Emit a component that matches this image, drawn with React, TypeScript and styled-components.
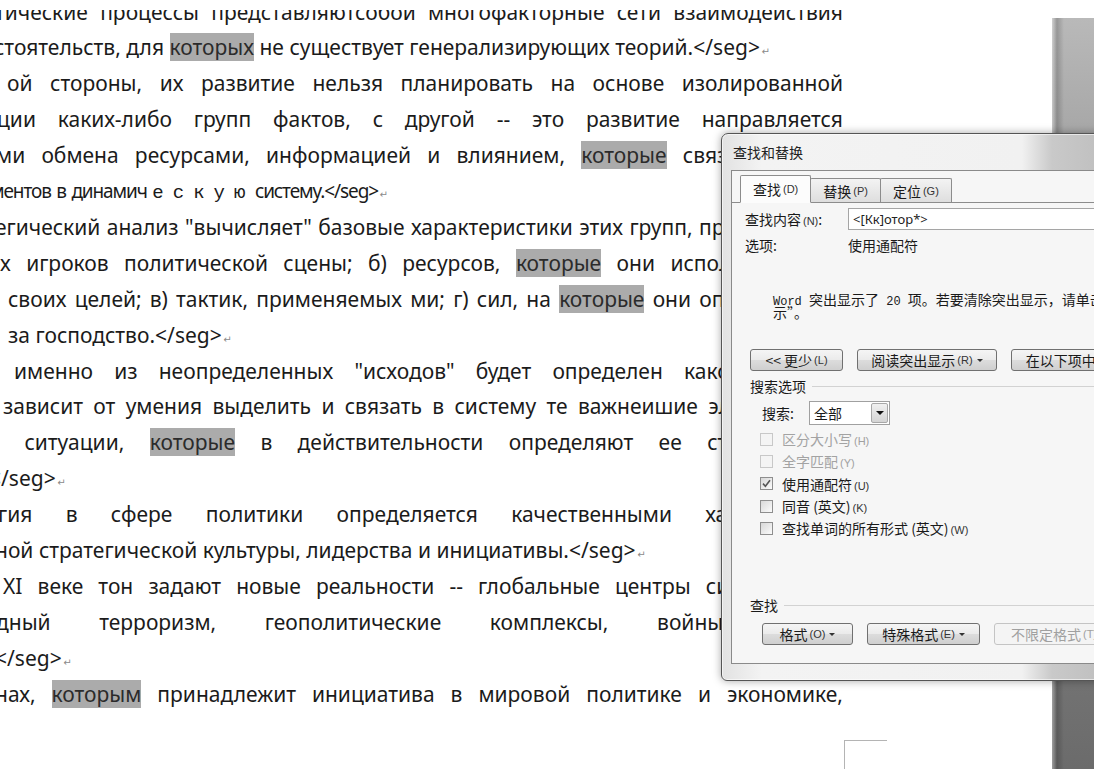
import React from "react"
import styled, { createGlobalStyle } from "styled-components"

const GlobalStyle = createGlobalStyle`
  html, body {
    margin: 0;
    padding: 0;
    background: #fff;
    overflow: hidden;
  }
`

const Screen = styled.div`
  position: relative;
  width: 1094px;
  height: 769px;
  overflow: hidden;
  display: flex;
  flex-direction: column;
  background: #fff;
`

/* white band of the window chrome above the scrolled page */
const TopCover = styled.div`
  height: 10px;
  flex-shrink: 0;
  background: #fff;
`

const Body = styled.div`
  flex: 1;
  display: flex;
  overflow: hidden;
`

/* ---------- document page ---------- */

const Page = styled.div`
  width: 1052px;
  flex-shrink: 0;
  display: flex;
  flex-direction: column;
  font-family: "Noto Sans", "Liberation Sans", sans-serif;
  font-size: 21px;
  color: #1b1b1b;
`

const TextColumn = styled.div`
  margin-top: -16px;
  display: flex;
  flex-direction: column;
`

const Line = styled.div<{ $justify?: boolean; $narrow?: boolean; $shift: number }>`
  display: flex;
  align-items: baseline;
  justify-content: ${p => (p.$justify ? "space-between" : "flex-start")};
  gap: ${p => (p.$justify ? "4px" : "5.5px")};
  width: ${p => 843 - p.$shift}px;
  margin-left: ${p => p.$shift}px;
  height: 35.9px;
  box-sizing: border-box;
  padding-top: ${p => (p.$narrow ? "5px" : "3.6px")};
  flex-shrink: 0;
  white-space: nowrap;
  font-size: ${p => (p.$narrow ? "19px" : "inherit")};
  letter-spacing: ${p => (p.$narrow ? "-1.1px" : "normal")};
`

const Hit = styled.span`
  background: #ababab;
  color: #2b2b2b;
`

const Spaced = styled.span`
  font-family: "Liberation Mono", monospace;
  font-size: 19px;
  letter-spacing: 9px;
  margin-right: -5px;
`

const ParaMark = styled.span`
  font-family: "DejaVu Sans", sans-serif;
  font-size: 10px;
  letter-spacing: 0;
  color: #8a8a8a;
  margin-left: -4px;
`

const CornerMark = styled.div`
  margin-top: 28px;
  margin-left: 844px;
  width: 42px;
  height: 40px;
  border-left: 1px solid #b4b4b4;
  border-top: 1px solid #b4b4b4;
`

const Gutter = styled.div`
  flex: 1;
  margin-top: 8px;
  background:
    linear-gradient(90deg, rgba(255, 255, 255, 0.35) 0, rgba(0, 0, 0, 0.18) 5px, rgba(0, 0, 0, 0) 12px),
    linear-gradient(180deg, #b9b9b9 0%, #a4a4a4 18%, #7e7e7e 70%, #6b6b6b 100%);
`

/* ---------- find & replace dialog ---------- */

const Dialog = styled.div`
  position: absolute;
  left: 721px;
  top: 133px;
  width: 430px;
  height: 548px;
  box-sizing: border-box;
  border: 1px solid #555;
  border-radius: 7px 7px 6px 6px;
  background: linear-gradient(90deg, #e2e2e2 0px, #f3f3f3 40px, #f1f1f1 300px, #c9c9c9 330px, #b6b6b6 100%);
  box-shadow: inset 0 0 0 1px rgba(255, 255, 255, 0.6), 0 0 8px rgba(0, 0, 0, 0.35);
  padding: 0 0 16px 9px;
  display: flex;
  flex-direction: column;
  overflow: hidden;
  font-family: "Noto Sans CJK SC", "Noto Sans", sans-serif;
  font-size: 14px;
  color: #1a1a1a;
`

const TitleBar = styled.div`
  height: 36px;
  display: flex;
  align-items: center;
  padding-left: 2px;
  color: #222;
`

const Panel = styled.div`
  flex: 1;
  border: 1px solid #8a8a8a;
  border-right: none;
  background: #f6f6f6;
  display: flex;
  flex-direction: column;
`

const TabRow = styled.div`
  height: 32px;
  box-sizing: border-box;
  display: flex;
  align-items: flex-end;
  padding-left: 8px;
  border-bottom: 1px solid #8c8c8c;
`

const Tab = styled.div<{ $active?: boolean }>`
  height: ${p => (p.$active ? "28px" : "24px")};
  box-sizing: border-box;
  padding: 0 12px;
  margin-bottom: ${p => (p.$active ? "-1px" : "0")};
  margin-left: ${p => (p.$active ? "0" : "-1px")};
  border: 1px solid #8c8c8c;
  border-bottom: ${p => (p.$active ? "1px solid #fcfcfc" : "none")};
  border-radius: 2px 2px 0 0;
  background: ${p => (p.$active ? "#fcfcfc" : "linear-gradient(#f3f3f3, #dedede)")};
  display: flex;
  align-items: center;
  white-space: nowrap;
  z-index: ${p => (p.$active ? 1 : 0)};
`

const Key = styled.span<{ $muted?: boolean }>`
  font-family: "Liberation Sans", sans-serif;
  font-size: 11px;
  margin-left: 2px;
  color: ${p => (p.$muted ? "#a0a0a0" : "#333")};
`

const Form = styled.div`
  display: flex;
  flex-direction: column;
  padding-left: 13px;
`

const FieldRow = styled.div<{ $top: number; $h: number }>`
  margin-top: ${p => p.$top}px;
  height: ${p => p.$h}px;
  display: flex;
  align-items: center;
  white-space: nowrap;
`

const FieldLabel = styled.span`
  width: 103px;
  flex-shrink: 0;
`

const Input = styled.div`
  flex: 1;
  height: 22px;
  box-sizing: border-box;
  border: 1px solid #a5a5a5;
  background: #fff;
  padding-left: 4px;
  display: flex;
  align-items: center;
  font-family: "Noto Sans", sans-serif;
  font-size: 13px;
  color: #222;
`

const Message = styled.div`
  margin-top: 39px;
  padding-left: 28px;
  display: flex;
  flex-direction: column;
`

const MessageLine = styled.div`
  height: 12.5px;
  line-height: 12.5px;
  white-space: nowrap;
`

const Mono = styled.span`
  font-family: "Liberation Mono", monospace;
  font-size: 12px;
  white-space: pre;
`

const ButtonRow = styled.div<{ $top: number; $left: number }>`
  margin-top: ${p => p.$top}px;
  padding-left: ${p => p.$left}px;
  display: flex;
  gap: 14px;
`

const Button = styled.div<{ $w: number; $disabled?: boolean }>`
  width: ${p => p.$w}px;
  height: 22px;
  flex-shrink: 0;
  box-sizing: border-box;
  border: 1px solid ${p => (p.$disabled ? "#c4c4c4" : "#707070")};
  border-radius: 3px;
  background: ${p =>
    p.$disabled ? "#f4f4f4" : "linear-gradient(#f5f5f5 0%, #ebebeb 48%, #dcdcdc 52%, #cfcfcf 100%)"};
  color: ${p => (p.$disabled ? "#a0a0a0" : "#1a1a1a")};
  display: flex;
  align-items: center;
  justify-content: center;
  white-space: nowrap;
`

const Caret = styled.span`
  width: 0;
  height: 0;
  margin-left: 4px;
  border-left: 3px solid transparent;
  border-right: 3px solid transparent;
  border-top: 3px solid #333;
`

const Group = styled.div<{ $top: number }>`
  margin-top: ${p => p.$top}px;
  padding-left: 5px;
  height: 16px;
  display: flex;
  align-items: center;
  white-space: nowrap;
  &::after {
    content: "";
    flex: 1;
    margin-left: 6px;
    border-top: 1px solid #d2d2d2;
  }
`

const SearchRow = styled.div`
  margin-top: 7px;
  padding-left: 17px;
  height: 24px;
  display: flex;
  align-items: center;
`

const SearchLabel = styled.span`
  width: 47px;
`

const Select = styled.div`
  width: 81px;
  height: 24px;
  box-sizing: border-box;
  border: 1px solid #a0a0a0;
  background: #fff;
  display: flex;
  align-items: center;
  padding-left: 4px;
`

const SelectArrow = styled.div`
  margin-left: auto;
  width: 17px;
  height: 20px;
  margin-right: 1px;
  box-sizing: border-box;
  border: 1px solid #a8a8a8;
  border-radius: 2px;
  background: linear-gradient(#f0f0f0, #d4d4d4);
  display: flex;
  align-items: center;
  justify-content: center;
  &::before {
    content: "";
    border-left: 4px solid transparent;
    border-right: 4px solid transparent;
    border-top: 4px solid #111;
  }
`

const Checks = styled.div`
  margin-top: 3px;
  padding-left: 15px;
  display: flex;
  flex-direction: column;
`

const CheckRow = styled.div<{ $disabled?: boolean }>`
  height: 22.3px;
  display: flex;
  align-items: center;
  gap: 9px;
  white-space: nowrap;
  color: ${p => (p.$disabled ? "#a3a3a3" : "#1a1a1a")};
`

const Box = styled.span<{ $disabled?: boolean }>`
  width: 13px;
  height: 13px;
  box-sizing: border-box;
  border: 1px solid ${p => (p.$disabled ? "#c8c8c8" : "#8e8e8e")};
  background: ${p => (p.$disabled ? "#f4f4f4" : "linear-gradient(135deg, #d8d8d8, #fbfbfb)")};
  display: flex;
  align-items: center;
  justify-content: center;
`

/* ---------- data ---------- */

type DocLine = { text: string; justify?: boolean; narrow?: boolean; shift: number; end?: boolean }

const docLines: DocLine[] = [
  { text: "тические процессы представляютсобой многофакторные сети взаимодействия", justify: true, shift: -5 },
  { text: "стоятельств, для {которых} не существует генерализирующих теорий.</seg>", shift: -6, end: true },
  { text: "ой стороны, их развитие нельзя планировать на основе изолированной", justify: true, shift: 7 },
  { text: "ции каких-либо групп фактов, с другой -- это развитие направляется", justify: true, shift: -3 },
  { text: "ми обмена ресурсами, информацией и влиянием, {которые} связывают все", justify: true, shift: -4 },
  { text: "ментов в динамич ~ескую систему.</seg>", narrow: true, shift: -10, end: true },
  { text: "егический анализ \"вычисляет\" базовые характеристики этих групп, прежде всего:", justify: true, shift: -5 },
  { text: "х игроков политической сцены; б) ресурсов, {которые} они используют для", justify: true, shift: 0 },
  { text: "своих целей; в) тактик, применяемых ми; г) сил, на {которые} они опираются во", justify: true, shift: 8 },
  { text: "за господство.</seg>", shift: 8, end: true },
  { text: "именно из неопределенных \"исходов\" будет определен какой именно", justify: true, shift: 14 },
  { text: "зависит от умения выделить и связать в систему те важнеишие элементы их", justify: true, shift: 3 },
  { text: "и ситуации, {которые} в действительности определяют ее структуру и", justify: true, shift: -14 },
  { text: "</seg>", shift: -11, end: true },
  { text: "гия в сфере политики определяется качественными характеристи", justify: true, shift: -2 },
  { text: "ной стратегической культуры, лидерства и инициативы.</seg>", shift: -5, end: true },
  { text: "XI веке тон задают новые реальности -- глобальные центры силы, новые", justify: true, shift: 3 },
  { text: "дный терроризм, геополитические комплексы, войны нового", justify: true, shift: -4 },
  { text: "</seg>", shift: -5, end: true },
  { text: "нах, {которым} принадлежит инициатива в мировой политике и экономике,", justify: true, shift: -5 },
]

const renderWord = (word: string, i: number) => {
  if (word.startsWith("{")) return <Hit key={i}>{word.slice(1, -1)}</Hit>
  if (word.startsWith("~")) return <Spaced key={i}>{word.slice(1)}</Spaced>
  return <span key={i}>{word}</span>
}

const checks = [
  { label: "区分大小写", key: "(H)", disabled: true },
  { label: "全字匹配", key: "(Y)", disabled: true },
  { label: "使用通配符", key: "(U)", checked: true },
  { label: "同音 (英文)", key: "(K)" },
  { label: "查找单词的所有形式 (英文)", key: "(W)" },
]

const CheckMark = () => (
  <svg width="9" height="9" viewBox="0 0 9 9">
    <path d="M1 4.6 L3.4 7.2 L8 1.2" fill="none" stroke="#555" strokeWidth="1.6" />
  </svg>
)

const FindDialog: React.FC = () => (
  <Dialog>
    <TitleBar>查找和替换</TitleBar>
    <Panel>
      <TabRow>
        <Tab $active>查找<Key>(D)</Key></Tab>
        <Tab>替换<Key>(P)</Key></Tab>
        <Tab>定位<Key>(G)</Key></Tab>
      </TabRow>
      <Form>
        <FieldRow $top={5} $h={22}>
          <FieldLabel>查找内容<Key>(N)</Key>:</FieldLabel>
          <Input>&lt;[Кк]отор*&gt;</Input>
        </FieldRow>
        <FieldRow $top={6} $h={18}>
          <FieldLabel>选项:</FieldLabel>
          <span>使用通配符</span>
        </FieldRow>
        <Message>
          <MessageLine>
            <Mono>Word </Mono>突出显示了<Mono> 20 </Mono>项。若要清除突出显示，请单击“阅读突出显示”
          </MessageLine>
          <MessageLine>示”。</MessageLine>
        </Message>
        <ButtonRow $top={31} $left={5}>
          <Button $w={93}>&lt;&lt; 更少<Key>(L)</Key></Button>
          <Button $w={140}>阅读突出显示<Key>(R)</Key><Caret /></Button>
          <Button $w={150}>在以下项中查找<Key>(I)</Key><Caret /></Button>
        </ButtonRow>
        <Group $top={7}>搜索选项</Group>
        <SearchRow>
          <SearchLabel>搜索:</SearchLabel>
          <Select>
            全部
            <SelectArrow />
          </Select>
        </SearchRow>
        <Checks>
          {checks.map(c => (
            <CheckRow key={c.label} $disabled={c.disabled}>
              <Box $disabled={c.disabled}>{c.checked && <CheckMark />}</Box>
              <span>
                {c.label}
                <Key $muted={c.disabled}>{c.key}</Key>
              </span>
            </CheckRow>
          ))}
        </Checks>
        <Group $top={58}>查找</Group>
        <ButtonRow $top={10} $left={17}>
          <Button $w={91}>格式<Key>(O)</Key><Caret /></Button>
          <Button $w={113}>特殊格式<Key>(E)</Key><Caret /></Button>
          <Button $w={120} $disabled>不限定格式<Key $muted>(T)</Key></Button>
        </ButtonRow>
      </Form>
    </Panel>
  </Dialog>
)

const App: React.FC = () => {
  return (
    <Screen>
      <GlobalStyle />
      <TopCover />
      <Body>
        <Page>
          <TextColumn>
            {docLines.map((line, n) => (
              <Line key={n} $justify={line.justify} $narrow={line.narrow} $shift={line.shift}>
                {line.text.split(" ").map(renderWord)}
                {line.end && <ParaMark>↵</ParaMark>}
              </Line>
            ))}
          </TextColumn>
          <CornerMark />
        </Page>
        <Gutter />
      </Body>
      <FindDialog />
    </Screen>
  )
}

export default App
